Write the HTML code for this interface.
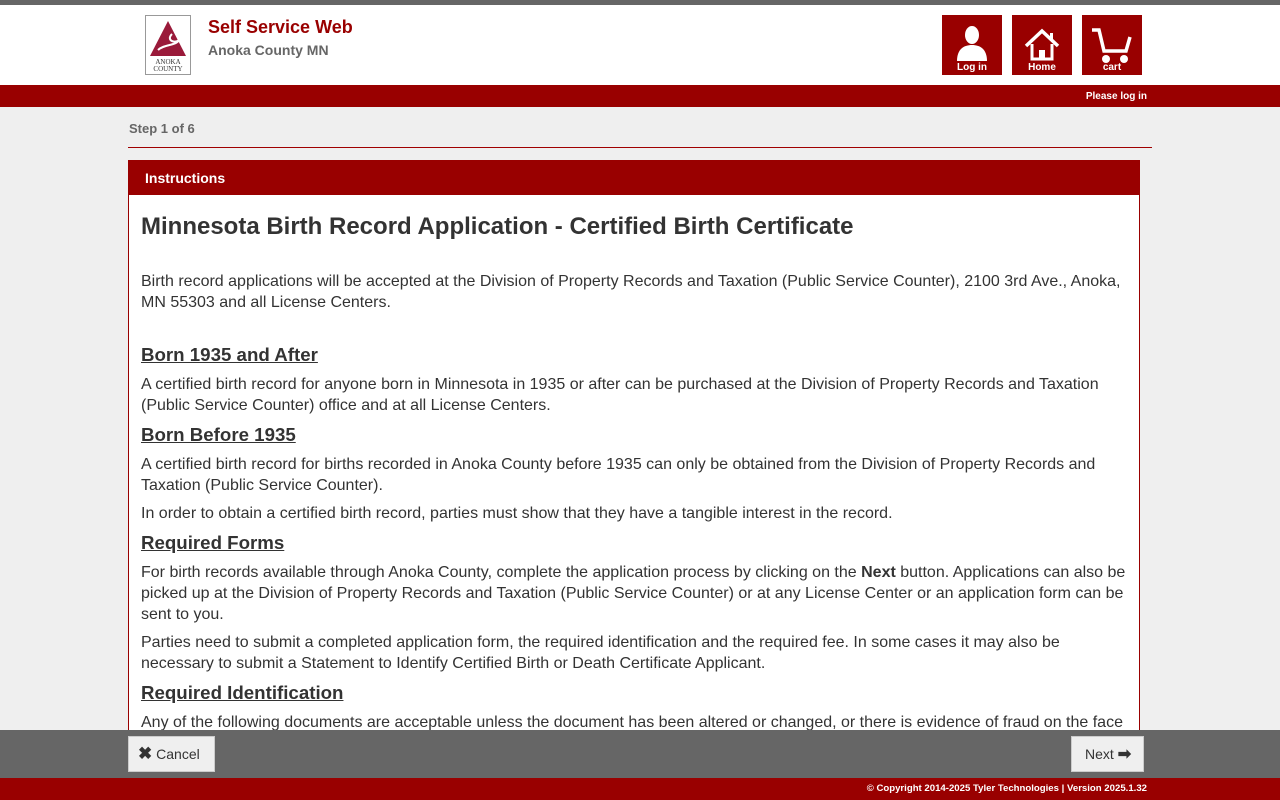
<!DOCTYPE html>
<html><head><meta charset="utf-8"><style>
*{box-sizing:border-box;margin:0;padding:0}
body{width:1280px;height:800px;overflow:hidden;background:#efefef;font-family:"Liberation Sans",Arial,sans-serif;color:#333;position:relative}
.top{height:5px;background:#666}
.hdr{height:80px;background:#fff;position:relative}
.logo{position:absolute;left:145px;top:10px;width:46px;height:60px;border:1px solid #999;background:#fff}
.t1{position:absolute;left:208px;top:12px;color:#990000;font-weight:bold;font-size:18px}
.t2{position:absolute;left:208px;top:37px;color:#666;font-weight:bold;font-size:14px}
.btn{position:absolute;top:10px;width:60px;height:60px;background:#990000;color:#fff;font-weight:bold;font-size:10px;text-align:center}
.btn span{position:absolute;left:0;right:0;bottom:2px}
.red{height:22px;background:#990000;color:#fff;font-size:10px;font-weight:bold;text-align:right;padding-right:133px;line-height:22px;padding-top:1px}
.step{position:absolute;left:129px;top:121px;font-size:13px;font-weight:bold;color:#666}
.line{position:absolute;left:128px;top:147px;width:1024px;height:1px;background:#a00000}
.panel{position:absolute;left:128px;top:160px;width:1012px;height:580px;background:#fff;border:1px solid #990000}
.ph{height:34px;background:#990000;color:#fff;font-weight:bold;font-size:14px;line-height:34px;padding-left:16px}
.pc{padding:0 12px;font-size:16px;line-height:21px}
h1{font-size:24px;margin:17px 0 29px;line-height:30px}
h2{font-size:18.7px;text-decoration:underline;margin:0 0 7px;line-height:24px}
p{margin:0 0 7px}
.bar{position:absolute;left:0;top:730px;width:1280px;height:48px;background:#666}
.b{position:absolute;top:6px;height:36px;background:#efefef;border:1px solid #ccc;font-size:14px;line-height:34px;color:#333}
.foot{position:absolute;left:0;top:778px;width:1280px;height:22px;background:#990000;color:#fff;font-size:9.6px;font-weight:bold;text-align:right;padding-right:133px;line-height:22px}
</style></head><body>
<div class="top"></div>
<div class="hdr">
<div class="logo"><svg width="44" height="58" viewBox="0 0 44 58"><polygon points="22,5 4,40 40,40" fill="#9a1a3a"/><path d="M12,34 C18,28 30,30 33,24 C28,28 20,24 26,18" stroke="#fff" stroke-width="2" fill="none"/><text x="22" y="48" font-size="7" text-anchor="middle" font-family="Liberation Serif" fill="#333">ANOKA</text><text x="22" y="55" font-size="7" text-anchor="middle" font-family="Liberation Serif" fill="#333">COUNTY</text></svg></div>
<div class="t1">Self Service Web</div>
<div class="t2">Anoka County MN</div>
<div class="btn" style="left:942px"><svg width="60" height="48" viewBox="0 0 60 48"><ellipse cx="30" cy="20" rx="7" ry="9" fill="#fff"/><path d="M15,46 C15,34 22,30 30,30 C38,30 45,34 45,46Z" fill="#fff"/></svg><span>Log in</span></div>
<div class="btn" style="left:1012px"><svg width="60" height="48" viewBox="0 0 60 48"><path d="M14,31 L30,16 L46,31" stroke="#fff" stroke-width="3.5" fill="none"/><path d="M20,29 V44 H40 V29" stroke="#fff" stroke-width="3" fill="none"/><rect x="27" y="35" width="6" height="9" fill="#fff"/><rect x="38" y="18" width="3" height="7" fill="#fff"/></svg><span>Home</span></div>
<div class="btn" style="left:1082px"><svg width="60" height="48" viewBox="0 0 60 48"><path d="M10,15 H17 L22,36 H44 L48,22" stroke="#fff" stroke-width="3.5" fill="none"/><circle cx="24" cy="44" r="4" fill="#fff"/><circle cx="42" cy="44" r="4" fill="#fff"/></svg><span>cart</span></div>
</div>
<div class="red">Please log in</div>
<div class="step">Step 1 of 6</div>
<div class="line"></div>
<div class="panel"><div class="ph">Instructions</div><div class="pc">
<h1>Minnesota Birth Record Application - Certified Birth Certificate</h1>
<p style="margin-bottom:30px">Birth record applications will be accepted at the Division of Property Records and Taxation (Public Service Counter), 2100 3rd Ave., Anoka, MN 55303 and all License Centers.</p>
<h2>Born 1935 and After</h2>
<p>A certified birth record for anyone born in Minnesota in 1935 or after can be purchased at the Division of Property Records and Taxation (Public Service Counter) office and at all License Centers.</p>
<h2>Born Before 1935</h2>
<p>A certified birth record for births recorded in Anoka County before 1935 can only be obtained from the Division of Property Records and Taxation (Public Service Counter).</p>
<p>In order to obtain a certified birth record, parties must show that they have a tangible interest in the record.</p>
<h2>Required Forms</h2>
<p>For birth records available through Anoka County, complete the application process by clicking on the <b>Next</b> button. Applications can also be picked up at the Division of Property Records and Taxation (Public Service Counter) or at any License Center or an application form can be sent to you.</p>
<p>Parties need to submit a completed application form, the required identification and the required fee. In some cases it may also be necessary to submit a Statement to Identify Certified Birth or Death Certificate Applicant.</p>
<h2>Required Identification</h2>
<p>Any of the following documents are acceptable unless the document has been altered or changed, or there is evidence of fraud on the face</p>
</div></div>
<div class="bar">
<div class="b" style="left:128px;width:87px;padding-left:9px"><b style="font-size:17px">✖</b> Cancel</div>
<div class="b" style="left:1071px;width:73px;padding-left:13px">Next <b style="font-size:16px">➡</b></div>
</div>
<div class="foot">© Copyright 2014-2025 Tyler Technologies | Version 2025.1.32</div>
</body></html>
